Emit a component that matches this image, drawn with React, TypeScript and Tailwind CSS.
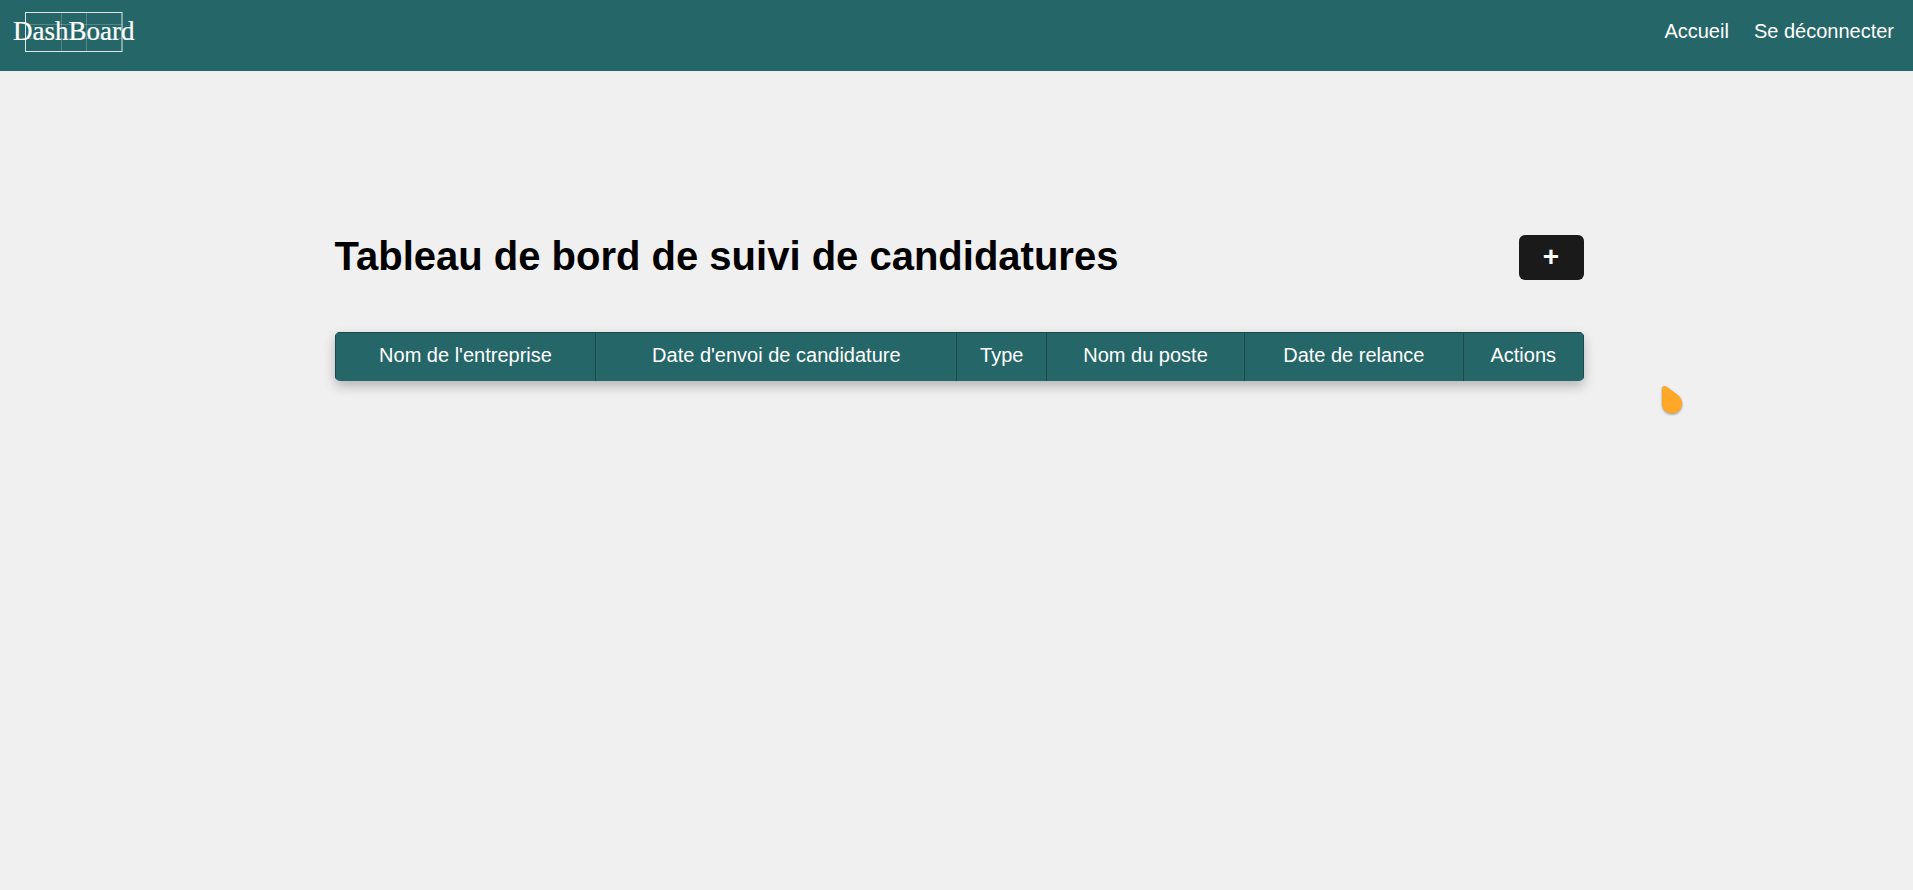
const columns = [
  "Nom de l'entreprise",
  "Date d'envoi de candidature",
  'Type',
  'Nom du poste',
  'Date de relance',
  'Actions',
];

function Logo() {
  return (
    <svg width="136" height="56" viewBox="0 0 136 56" role="img" aria-label="DashBoard" className="block">
      <g fill="none" stroke="#ffffff">
        <path d="M61.5 12V51M86.5 12V51M26 24.5H122M26 38.5H122" strokeOpacity="0.22" />
        <rect x="25.500" y="12.500" width="96.500" height="39" strokeOpacity="0.85" />
      </g>
      <text
        x="13"
        y="40"
        fill="#ffffff"
        stroke="#ffffff"
        strokeWidth="0.2"
        fontSize="27"
        fontFamily="'Liberation Serif', serif"
      >
        DashBoard
      </text>
    </svg>
  );
}

export default function App() {
  return (
    <div className="min-h-screen bg-[#f0f0f0] font-['Liberation_Sans',Arial,sans-serif] text-xl leading-6">
      <header className="flex h-[71px] items-start justify-between bg-[#256668] pr-[19px] text-white">
        <a href="#accueil">
          <Logo />
        </a>
        <nav className="flex gap-[25px] pt-[19px]">
          <a href="#accueil">Accueil</a>
          <a href="#deconnexion">Se déconnecter</a>
        </nav>
      </header>

      <main className="mx-auto max-w-[1280px] pt-[164px] pr-[13px] pl-[18px]">
        <div className="flex items-start justify-between">
          <h1 className="text-[40px] leading-[42px] font-bold text-black">
            Tableau de bord de suivi de candidatures
          </h1>
          <button
            type="button"
            aria-label="Ajouter une candidature"
            className="h-[45px] w-[65px] rounded-md bg-[#1a1a1a] pb-0.5 text-[28px] leading-none font-bold text-white"
          >
            +
          </button>
        </div>

        <div className="mt-[52px] overflow-hidden rounded-[5px] bg-[#256668] shadow-[0_5px_12px_rgba(0,0,0,0.25)]">
          <table className="w-full border-collapse text-white">
            <thead>
              <tr>
                {columns.map((column) => (
                  <th
                    key={column}
                    scope="col"
                    className="border border-b-0 border-[#1b484a] px-3 pt-[10px] pb-[14px] text-center font-normal whitespace-nowrap"
                  >
                    {column}
                  </th>
                ))}
              </tr>
            </thead>
          </table>
        </div>
      </main>

      <svg
        width="28"
        height="36"
        viewBox="0 0 28 36"
        aria-hidden="true"
        className="pointer-events-none absolute top-[382px] left-[1658px] drop-shadow-[0_1px_1px_rgba(0,0,0,0.4)]"
      >
        <path
          d="M4 7C4 4 6.500 3 9 5L18 11.500C22 14.500 24 17.500 24 21C24 27 20 31.500 14.500 31.500C8.500 31.500 4 27.500 4 21.500Z"
          fill="#ffa726"
        />
      </svg>
    </div>
  );
}
